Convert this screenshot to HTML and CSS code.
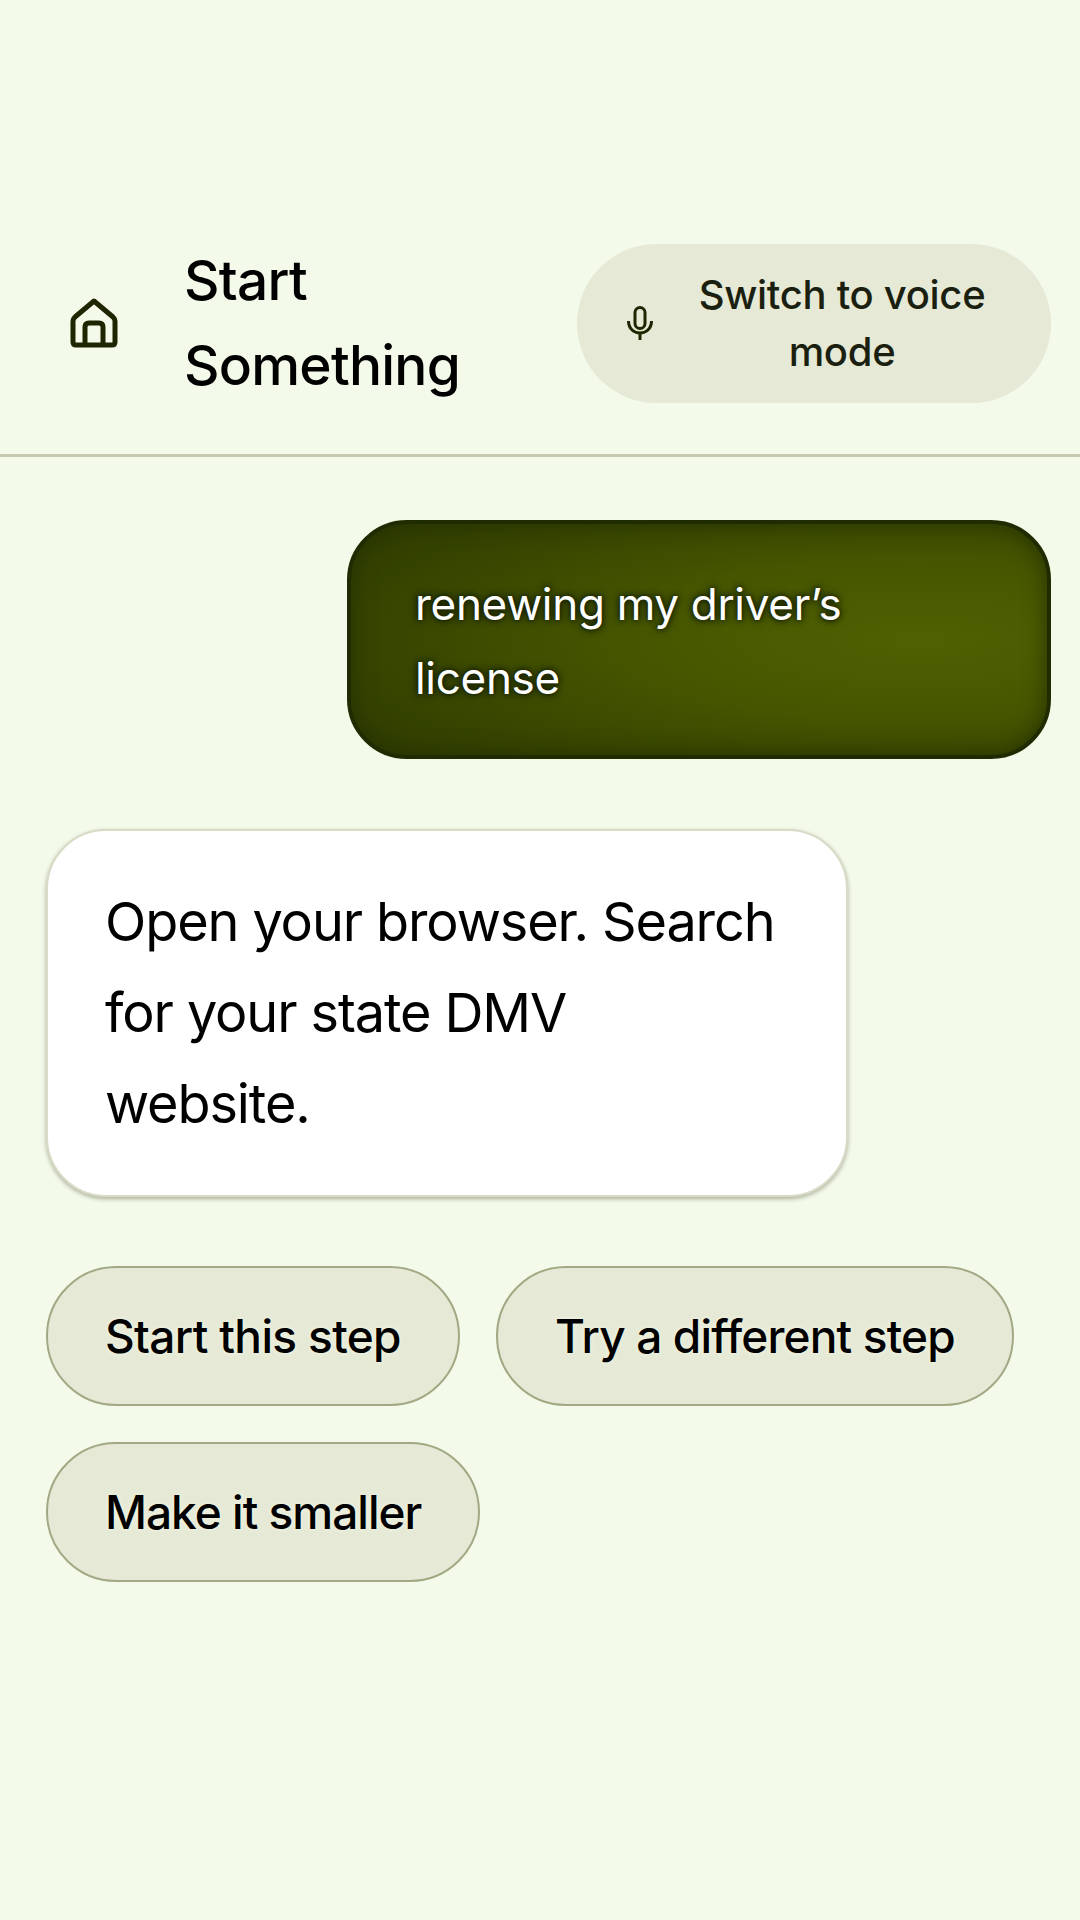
FILE: index.html
```html
<!DOCTYPE html>
<html>
<head>
	<title>Start Something</title>
	<link rel="stylesheet" href="styles.css">
</head>
<body>
<!-- Top bar -->
<div class="topbar">
	<svg class="home-icon" viewBox="0 0 48 50" width="48" height="50">
		<path d="M24 3 L5 19 Q3 21 3 23 V44 Q3 47 6 47 H42 Q45 47 45 44 V23 Q45 21 43 19 Z M15 47 V29 Q15 25 19 25 H29 Q33 25 33 29 V47" fill="none" stroke="#1d2600" stroke-width="5" stroke-linejoin="round"/>
	</svg>
	<div class="title">Start Something</div>
	<div class="voice-btn">
		<svg class="mic-icon" viewBox="0 0 26 34" width="26" height="34">
			<rect x="8" y="1.5" width="10" height="21" rx="5" fill="none" stroke="#1d2600" stroke-width="3"/>
			<path d="M1.5 15 C1.5 31 24.5 31 24.5 15 M13 27 V34" fill="none" stroke="#1d2600" stroke-width="3"/>
		</svg>
		<div class="voice-label">Switch to voice mode</div>
	</div>
</div>

<!-- Conversation -->
<div class="chat">
	<div class="bubble-user">renewing my driver’s license</div>
	<div class="bubble-reply">Open your browser. Search for your state DMV website.</div>
	<div class="chips">
		<div class="chip">Start this step</div>
		<div class="chip chip-tight">Try a different step</div>
		<div class="chip chip-tighter">Make it smaller</div>
	</div>
</div>
</body>
</html>
```

FILE: styles.css
```css
html, body {
	margin: 0;
	height: 1920px;
	background-color: #f3faea;
	font-family: "Inter", "Liberation Sans", sans-serif;
	color: #000;
	overflow: hidden;
}

.topbar {
	display: flex;
	align-items: center;
	margin-top: 238px;
	padding: 0 29px 46px 70px;
	border-bottom: 3px solid #c6c8b0;
}
.home-icon {
	flex: none;
	margin-right: 66px;
}
.title {
	width: 300px;
	font-size: 55px;
	line-height: 85px;
	font-weight: 500;
	letter-spacing: -0.75px;
}
.voice-btn {
	display: flex;
	align-items: center;
	width: 474px;
	height: 159px;
	margin-left: auto;
	box-sizing: border-box;
	padding: 0 32px 0 50px;
	border-radius: 80px;
	background-color: #e5e9d5;
}
.mic-icon {
	flex: none;
}
.voice-label {
	flex: 1;
	text-align: center;
	font-size: 40px;
	line-height: 57px;
	font-weight: 500;
	letter-spacing: -0.3px;
	color: #1b1f10;
	padding-left: 12px;
}

.chat {
	display: flex;
	flex-direction: column;
	padding: 63px 29px 0 46px;
}
.bubble-user {
	box-sizing: border-box;
	align-self: flex-end;
	width: 704px;
	height: 239px;
	padding: 43px 190px 0 64px;
	border-radius: 60px;
	border: 4px solid #1f2b00;
	background: radial-gradient(ellipse 720px 190px at 82% 50%, #4f6102 0%, #465600 40%, #2d3a00 100%);
	box-shadow: inset 0 0 22px #263200;
	color: #fff;
	font-size: 44px;
	line-height: 74px;
	letter-spacing: -0.3px;
	text-shadow: 0 0 5px #111800, 0 0 8px #111800;
}
.bubble-reply {
	box-sizing: border-box;
	width: 802px;
	height: 368px;
	margin-top: 70px;
	padding: 45px 70px 0 57px;
	border-radius: 60px;
	background-color: #fff;
	border: 2px solid #d8dbc6;
	box-shadow: 0 2px 4px #aeb09c;
	font-size: 54px;
	line-height: 91px;
	letter-spacing: -1.1px;
}
.chips {
	display: flex;
	flex-wrap: wrap;
	gap: 36px;
	margin-top: 69px;
}
.chip {
	box-sizing: border-box;
	height: 140px;
	line-height: 136px;
	padding: 0 57px;
	border-radius: 70px;
	border: 2px solid #a3a884;
	background-color: #e5e9d5;
	font-size: 46px;
	font-weight: 500;
	letter-spacing: -0.65px;
	text-shadow: 0 0 5px #f4f7e6;
}
.chip-tight {
	letter-spacing: -0.85px;
}
.chip-tighter {
	letter-spacing: -1px;
}
```
